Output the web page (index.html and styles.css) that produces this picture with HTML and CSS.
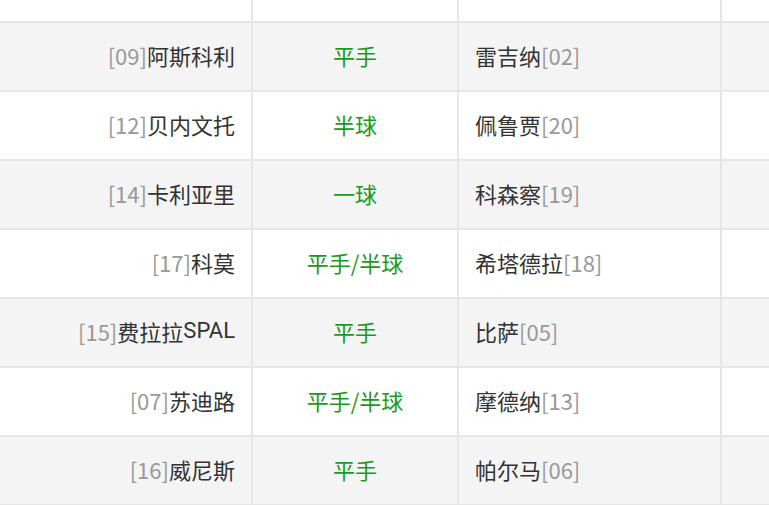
FILE: index.html
```html
<!DOCTYPE html>
<html lang="zh">
<head>
<meta charset="utf-8">
<link rel="stylesheet" href="styles.css">
</head>
<body>
<div class="table">
  <div class="row partial"><div class="cell"></div><div class="cell"></div><div class="cell"></div><div class="cell"></div></div>
  <div class="row alt"><div class="cell home"><span class="rank">[09]</span>阿斯科利</div><div class="cell hc">平手</div><div class="cell away">雷吉纳<span class="rank">[02]</span></div><div class="cell"></div></div>
  <div class="row"><div class="cell home"><span class="rank">[12]</span>贝内文托</div><div class="cell hc">半球</div><div class="cell away">佩鲁贾<span class="rank">[20]</span></div><div class="cell"></div></div>
  <div class="row alt"><div class="cell home"><span class="rank">[14]</span>卡利亚里</div><div class="cell hc">一球</div><div class="cell away">科森察<span class="rank">[19]</span></div><div class="cell"></div></div>
  <div class="row"><div class="cell home"><span class="rank">[17]</span>科莫</div><div class="cell hc">平手/半球</div><div class="cell away">希塔德拉<span class="rank">[18]</span></div><div class="cell"></div></div>
  <div class="row alt"><div class="cell home"><span class="rank">[15]</span>费拉拉<span class="latin">SPAL</span></div><div class="cell hc">平手</div><div class="cell away">比萨<span class="rank">[05]</span></div><div class="cell"></div></div>
  <div class="row"><div class="cell home"><span class="rank">[07]</span>苏迪路</div><div class="cell hc">平手/半球</div><div class="cell away">摩德纳<span class="rank">[13]</span></div><div class="cell"></div></div>
  <div class="row alt"><div class="cell home"><span class="rank">[16]</span>威尼斯</div><div class="cell hc">平手</div><div class="cell away">帕尔马<span class="rank">[06]</span></div><div class="cell"></div></div>
</div>
</body>
</html>
```
FILE: styles.css
```css
html, body {
  margin: 0;
  padding: 0;
  background: #fff;
  overflow: hidden;
}
body {
  font-family: "Noto Sans CJK SC", sans-serif;
  font-size: 22px;
  line-height: 1.2;
  color: #333;
}
.table {
  display: flex;
  flex-direction: column;
  gap: 2px;
  background: #e6e6e6;
  padding-bottom: 2px;
  width: 769px;
}
.row {
  display: grid;
  grid-template-columns: 251px 204px 261px 1fr;
  column-gap: 2px;
  height: 67px;
}
.row.partial {
  height: 21px;
}
.cell {
  background: #fff;
  display: flex;
  align-items: center;
  white-space: nowrap;
  padding-bottom: 3px;
  box-sizing: border-box;
}
.row.alt .cell {
  background: #f4f4f4;
}
.home {
  justify-content: flex-end;
  padding-right: 16px;
}
.hc {
  justify-content: center;
  color: #1a9a1a;
}
.away {
  padding-left: 16px;
}
.rank {
  color: #999;
}
.latin {
  font-family: Roboto, sans-serif;
}
```
